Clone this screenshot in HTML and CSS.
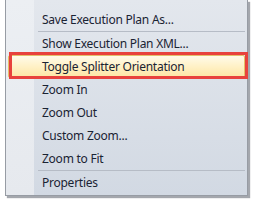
FILE: index.html
```html
<!DOCTYPE html>
<html>
<head>
<meta charset="utf-8">
<link rel="stylesheet" href="styles.css">
</head>
<body>
<div class="menu">
  <div class="gutter"></div>
  <ul class="items">
    <li class="item">Save Execution Plan As...</li>
    <li class="sep"></li>
    <li class="item">Show Execution Plan XML...</li>
    <li class="item hot">Toggle Splitter Orientation</li>
    <li class="item">Zoom In</li>
    <li class="item">Zoom Out</li>
    <li class="item">Custom Zoom...</li>
    <li class="item">Zoom to Fit</li>
    <li class="sep"></li>
    <li class="item">Properties</li>
  </ul>
  <div class="callout"></div>
</div>
</body>
</html>
```
FILE: styles.css
```css
html, body {
  margin: 0;
  padding: 0;
  background: #ffffff;
}
body {
  width: 254px;
  height: 203px;
  overflow: hidden;
}
.menu {
  position: relative;
  margin-left: 5px;
  width: 241px;
  height: 195px;
  border: 1px solid #979ca4;
  border-top: none;
  background: linear-gradient(#e3e7ed, #d2d9e3);
  box-shadow: 2px 2px 1px rgba(90, 95, 105, 0.55);
  display: flex;
}
.gutter {
  position: absolute;
  left: 0;
  top: 0;
  bottom: 0;
  width: 28px;
  background: linear-gradient(#eceff3, #e6e9ee);
}
.items {
  position: relative;
  list-style: none;
  margin: 0;
  padding: 8px 0 1px 0;
  flex: 1;
  font-family: "Noto Sans", "Open Sans", sans-serif;
  font-size: 12px;
  color: #1a2333;
}
.item {
  height: 23px;
  line-height: 23px;
  padding-left: 36px;
  white-space: nowrap;
  letter-spacing: -0.25px;
}
.item.hot {
  margin: 0 2px;
  padding-left: 33px;
  height: 21px;
  line-height: 21px;
  border: 1px solid #e3c06a;
  border-radius: 2px;
  background: linear-gradient(#fffbea, #fff1c6 50%, #fde6a4);
}
.sep {
  height: 1px;
  margin: 0 2px 0 32px;
  background: #b6bcc6;
}
.callout {
  position: absolute;
  left: 3px;
  top: 52px;
  width: 233px;
  height: 21px;
  border: 3px solid #e8423d;
}
```
